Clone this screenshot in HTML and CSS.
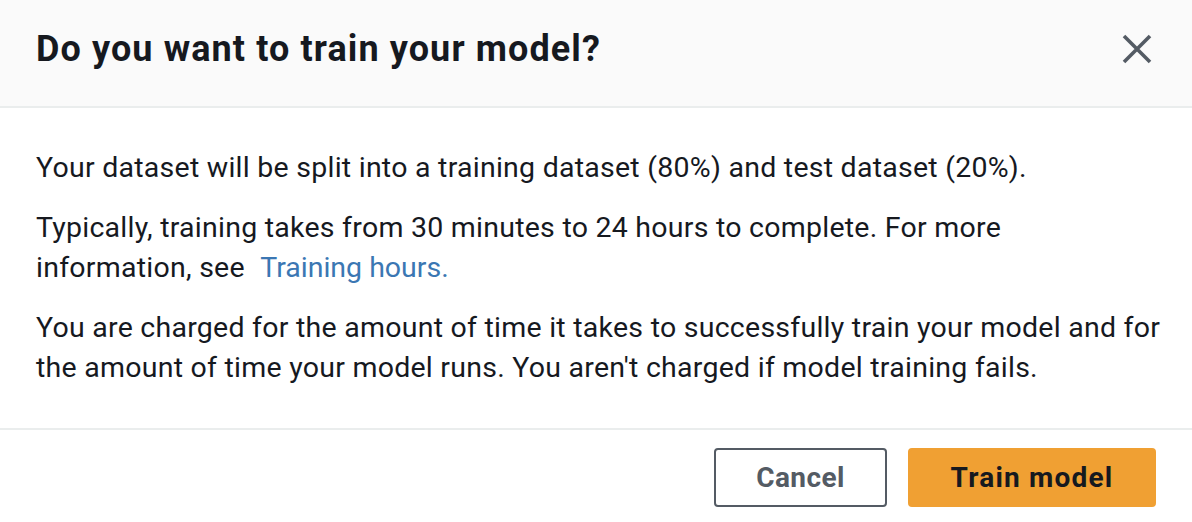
FILE: index.html
```html
<!DOCTYPE html>
<html lang="en">
<head>
<meta charset="utf-8">
<title>Train model</title>
<link rel="stylesheet" href="styles.css">
</head>
<body>
<div class="modal">
  <header class="modal-header">
    <h2 class="modal-title">Do you want to train your model?</h2>
    <button class="close-btn" aria-label="Close">
      <svg viewBox="0 0 40 40" width="40" height="40" aria-hidden="true">
        <path d="M7 7 L33 33 M33 7 L7 33" stroke="#545b64" stroke-width="3.6" fill="none"/>
      </svg>
    </button>
  </header>
  <div class="modal-body">
    <p>Your dataset will be split into a training dataset (80%) and test dataset (20%).</p>
    <p><span>Typically, training takes from 30 minutes to 24 hours to complete. For more information, see</span> <a href="#" class="link">Training hours.</a></p>
    <p>You are charged for the amount of time it takes to successfully train your model and for the amount of time your model runs. You aren't charged if model training fails.</p>
  </div>
  <footer class="modal-footer">
    <button class="btn btn-normal">Cancel</button>
    <button class="btn btn-primary">Train model</button>
  </footer>
</div>
</body>
</html>
```

FILE: styles.css
```css
* { box-sizing: border-box; }
html, body {
  margin: 0;
  padding: 0;
  background: #ffffff;
}
body {
  font-family: Roboto, "Liberation Sans", sans-serif;
  color: #16191f;
  width: 1192px;
  height: 522px;
  overflow: hidden;
}
.modal {
  display: flex;
  flex-direction: column;
  height: 522px;
}
.modal-header {
  background: #fafafa;
  border-bottom: 2px solid #eaeded;
  height: 108px;
  padding: 0 36px;
  display: flex;
  align-items: center;
  justify-content: space-between;
}
.modal-title {
  margin: 0;
  font-size: 36px;
  line-height: 44px;
  font-weight: 700;
  letter-spacing: 1.1px;
  color: #16191f;
  padding-bottom: 8px;
}
.close-btn {
  border: 0;
  background: transparent;
  padding: 0;
  margin: 0 -1px 8px 0;
  width: 40px;
  height: 40px;
  cursor: pointer;
  display: flex;
}
.modal-body {
  padding: 40px 30px 40px 36px;
  border-bottom: 2px solid #eaeded;
}
.modal-body p {
  margin: 0 0 20px;
  font-size: 28.5px;
  letter-spacing: 0.25px;
  line-height: 40px;
}
.modal-body p:last-child { margin-bottom: 0; }
.link {
  color: #3b77b3;
  text-decoration: none;
  margin-left: 8px;
  letter-spacing: 0;
}
.modal-footer {
  display: flex;
  justify-content: flex-end;
  gap: 21px;
  padding: 18px 36px 0;
}
.btn {
  font-family: Roboto, "Liberation Sans", sans-serif;
  font-size: 28px;
  font-weight: 700;
  height: 59px;
  border-radius: 4px;
  cursor: pointer;
  padding: 0;
}
.btn-normal {
  background: #ffffff;
  color: #545b64;
  border: 2px solid #545b64;
  width: 173px;
  letter-spacing: 0.4px;
}
.btn-primary {
  background: #f0a033;
  color: #16191f;
  border: 2px solid #f0a033;
  width: 248px;
  letter-spacing: 1.2px;
}
```
